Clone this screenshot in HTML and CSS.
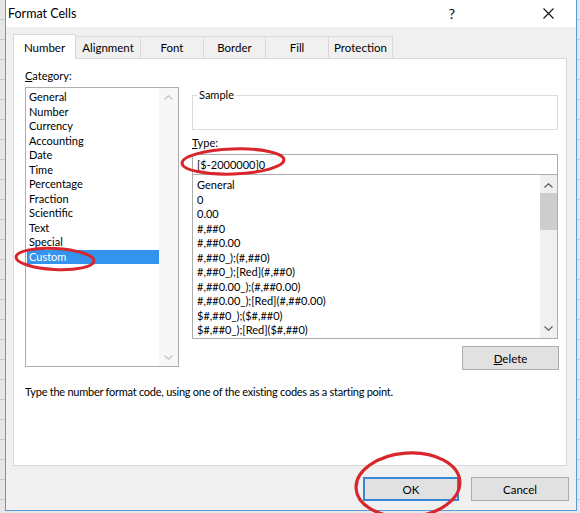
FILE: index.html
```html
<!DOCTYPE html>
<html>
<head>
<meta charset="utf-8">
<title>Format Cells</title>
<link rel="stylesheet" href="styles.css">
</head>
<body>
<div class="window">
  <div class="titlebar">
    <span class="title">Format Cells</span>
    <span class="caption-btn help">?</span>
    <span class="caption-btn close">
      <svg width="11" height="11" viewBox="0 0 11 11"><path d="M0.5 0.5L10.5 10.5M10.5 0.5L0.5 10.5" stroke="#111" stroke-width="1.1" fill="none"/></svg>
    </span>
  </div>
  <div class="client">
    <div class="tabs">
      <div class="tab tab-number active">Number</div>
      <div class="tab tab-alignment">Alignment</div>
      <div class="tab tab-font">Font</div>
      <div class="tab tab-border">Border</div>
      <div class="tab tab-fill">Fill</div>
      <div class="tab tab-protection">Protection</div>
    </div>
    <div class="panel">
      <div class="columns">
        <div class="col-left">
          <div class="label"><u>C</u>ategory:</div>
          <div class="listbox category">
            <ul class="items">
              <li>General</li>
              <li>Number</li>
              <li>Currency</li>
              <li>Accounting</li>
              <li>Date</li>
              <li>Time</li>
              <li>Percentage</li>
              <li>Fraction</li>
              <li>Scientific</li>
              <li>Text</li>
              <li>Special</li>
              <li class="selected">Custom</li>
            </ul>
            <div class="vscroll disabled">
              <svg class="arrow" width="9" height="5" viewBox="0 0 9 5"><path d="M0.5 4.5L4.5 0.7L8.5 4.5" stroke="#c4c4c4" stroke-width="1.2" fill="none"/></svg>
              <svg class="arrow" width="9" height="5" viewBox="0 0 9 5"><path d="M0.5 0.5L4.5 4.3L8.5 0.5" stroke="#c4c4c4" stroke-width="1.2" fill="none"/></svg>
            </div>
          </div>
        </div>
        <div class="col-right">
          <fieldset class="sample"><legend>Sample</legend></fieldset>
          <div class="label type-label"><u>T</u>ype:</div>
          <div class="textbox">[$-2000000]0</div>
          <div class="listbox types">
            <ul class="items">
              <li>General</li>
              <li>0</li>
              <li>0.00</li>
              <li>#,##0</li>
              <li>#,##0.00</li>
              <li>#,##0_);(#,##0)</li>
              <li>#,##0_);[Red](#,##0)</li>
              <li>#,##0.00_);(#,##0.00)</li>
              <li>#,##0.00_);[Red](#,##0.00)</li>
              <li>$#,##0_);($#,##0)</li>
              <li>$#,##0_);[Red]($#,##0)</li>
            </ul>
            <div class="vscroll">
              <svg class="arrow" width="9" height="5" viewBox="0 0 9 5"><path d="M0.5 4.5L4.5 0.7L8.5 4.5" stroke="#606060" stroke-width="1.2" fill="none"/></svg>
              <div class="thumb-track"><div class="thumb"></div></div>
              <svg class="arrow" width="9" height="5" viewBox="0 0 9 5"><path d="M0.5 0.5L4.5 4.3L8.5 0.5" stroke="#606060" stroke-width="1.2" fill="none"/></svg>
            </div>
          </div>
          <div class="delete-row"><button class="btn delete"><u>D</u>elete</button></div>
        </div>
      </div>
      <p class="hint">Type the number format code, using one of the existing codes as a starting point.</p>
    </div>
    <div class="footer">
      <button class="btn ok default">OK</button>
      <button class="btn cancel">Cancel</button>
    </div>
  </div>
</div>
<svg class="annotations" width="580" height="513" viewBox="0 0 580 513">
  <ellipse cx="233" cy="161.5" rx="51" ry="12.5" transform="rotate(-2 233 161.5)" fill="none" stroke="#d7262c" stroke-width="3"/>
  <ellipse cx="55" cy="259" rx="39" ry="10.5" transform="rotate(3 55 259)" fill="none" stroke="#d7262c" stroke-width="3"/>
  <ellipse cx="408" cy="485" rx="52" ry="32" transform="rotate(-4 408 485)" fill="none" stroke="#d7262c" stroke-width="3.2"/>
</svg>
</body>
</html>
```

FILE: styles.css
```css
* {
  box-sizing: border-box;
}

html, body {
  margin: 0;
  padding: 0;
}

body {
  width: 580px;
  height: 513px;
  overflow: hidden;
  position: relative;
  background-color: #e6e6e6;
  background-image: repeating-linear-gradient(to bottom, transparent 0, transparent 19px, #c9c9c9 19px, #c9c9c9 20px);
  font-family: "Lato", "Noto Sans", sans-serif;
  font-size: 11px;
  color: #000;
}

.window {
  margin-left: 5px;
  width: 572px;
  height: 511px;
  border: 1px solid #5b9bd8;
  border-top: none;
  background: #f0f0f0;
}

.titlebar {
  height: 27px;
  background: #fff;
  display: flex;
  align-items: center;
  padding: 0 5px 0 2px;
}

.title {
  font-size: 12.5px;
  flex: 1;
}

.caption-btn {
  width: 46px;
  height: 27px;
  display: flex;
  align-items: center;
  justify-content: center;
}

.help {
  font-size: 14px;
  margin-right: 50px;
}

.client {
  padding: 7px 7px 0 7px;
}

.tabs {
  display: flex;
  align-items: flex-end;
  height: 24px;
}

.tab {
  height: 22px;
  border: 1px solid #d9d9d9;
  border-bottom: none;
  margin-left: -1px;
  background: #f0f0f0;
  display: flex;
  align-items: center;
  justify-content: center;
  font-size: 11.5px;
}

.tab:first-child {
  margin-left: 0;
}

.tab.active {
  height: 25px;
  margin-bottom: -1px;
  background: #fff;
  position: relative;
  z-index: 1;
}

.tab-number { width: 63px; }
.tab-alignment { width: 66px; }
.tab-font { width: 64px; }
.tab-border { width: 63px; }
.tab-fill { width: 64px; }
.tab-protection { width: 65px; }

.panel {
  width: 554px;
  height: 408px;
  background: #fff;
  border: 1px solid #d9d9d9;
  padding: 9px 8px 0 11px;
}

.columns {
  display: flex;
  gap: 13px;
  align-items: flex-start;
}

.col-left {
  width: 154px;
}

.col-right {
  width: 366px;
}

.label {
  height: 16px;
  line-height: 16px;
  margin-bottom: 3px;
}

.listbox {
  display: flex;
  border: 1px solid #828790;
  background: #fff;
  overflow: hidden;
}

.items {
  list-style: none;
  margin: 0;
  flex: 1;
  line-height: 14.5px;
  white-space: nowrap;
  overflow: hidden;
}

.category {
  height: 280px;
  border-color: #adadad;
}

.category .items {
  padding: 2px 0 0 1px;
}

.category li {
  padding-left: 2px;
}

.category li.selected {
  background: #3393ee;
  color: #fff;
}

.vscroll {
  width: 17px;
  flex: none;
  background: #f0f0f0;
  display: flex;
  flex-direction: column;
  align-items: center;
  justify-content: space-between;
  padding: 7px 0 6px;
}

.vscroll.disabled {
  background: #f7f7f7;
  width: 19px;
}

.thumb-track {
  flex: 1;
  width: 100%;
  padding-top: 4px;
}

.thumb {
  height: 37px;
  background: #cdcdcd;
}

.sample {
  margin: 20px 0 0;
  padding: 0;
  height: 42px;
  border: 1px solid #dcdcdc;
}

.sample legend {
  margin-left: 4px;
  padding: 0 2px;
  line-height: 14px;
}

.type-label {
  margin-top: 5px;
  margin-bottom: 3px;
}

.textbox {
  height: 21px;
  border: 1px solid #adadad;
  padding-left: 4px;
  line-height: 19px;
}

.types {
  height: 164px;
  border-color: #adadad;
  border-top: none;
}

.types .items {
  padding: 3px 0 0 4px;
}

.types .vscroll {
  padding-top: 8px;
  padding-bottom: 7px;
}

.types .vscroll .arrow:first-child {
  margin-bottom: 1px;
}

.delete-row {
  display: flex;
  justify-content: flex-end;
  margin-top: 7px;
}

.btn {
  font-family: inherit;
  font-size: 11.5px;
  color: #000;
  background: #e1e1e1;
  border: 1px solid #adadad;
  height: 24px;
  padding: 0;
  margin: 0;
}

.delete {
  width: 97px;
  margin-right: -1px;
}

.hint {
  margin: 14px 0 0;
  line-height: 16px;
  letter-spacing: -0.25px;
}

.footer {
  display: flex;
  justify-content: flex-end;
  gap: 12px;
  margin-top: 11px;
}

.ok {
  width: 96px;
}

.cancel {
  width: 98px;
}

.btn.default {
  border: 2px solid #3a86d6;
}

.annotations {
  position: absolute;
  left: 0;
  top: 0;
  pointer-events: none;
}
```
